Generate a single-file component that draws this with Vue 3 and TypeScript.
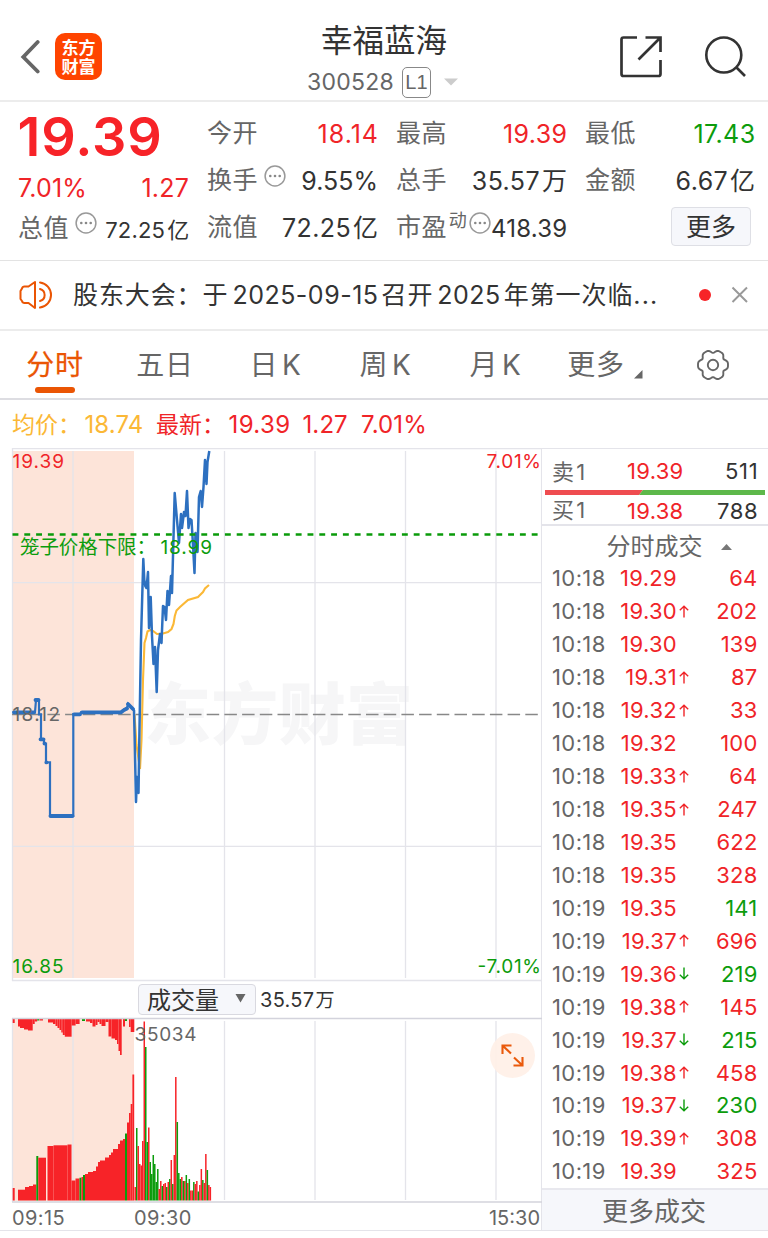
<script setup lang="ts">
interface Trade {
  time: string
  price: string
  dir: '' | 'up' | 'down'
  vol: string
  side: 'buy' | 'sell'
}
type Bar = [x: number, w: number, y: number, color: 'r' | 'g']

const parse = (row: string): Trade => {
  const [time, price, d, vol, s] = row.split(' ')
  return {
    time,
    price,
    dir: d === 'u' ? 'up' : d === 'd' ? 'down' : '',
    vol,
    side: s === 's' ? 'sell' : 'buy',
  }
}

const trades: Trade[] = [
  '10:18 19.29 - 64 b',
  '10:18 19.30 u 202 b',
  '10:18 19.30 - 139 b',
  '10:18 19.31 u 87 b',
  '10:18 19.32 u 33 b',
  '10:18 19.32 - 100 b',
  '10:18 19.33 u 64 b',
  '10:18 19.35 u 247 b',
  '10:18 19.35 - 622 b',
  '10:18 19.35 - 328 b',
  '10:19 19.35 - 141 s',
  '10:19 19.37 u 696 b',
  '10:19 19.36 d 219 s',
  '10:19 19.38 u 145 b',
  '10:19 19.37 d 215 s',
  '10:19 19.38 u 458 b',
  '10:19 19.37 d 230 s',
  '10:19 19.39 u 308 b',
  '10:19 19.39 - 325 b',
].map(parse)

const tabs = ['分时', '五日', '日 K', '周 K', '月 K']
const gridX = [73, 224.5, 315, 405.5, 496]

// Six-lobed gear outline, sampled every 5 degrees
const gear =
  'M' +
  Array.from({ length: 72 }, (_, i) => {
    const a = (i * Math.PI) / 36
    const r = 14 + 1.45 * Math.cos(6 * a) - 0.45 * Math.cos(12 * a)
    return `${(16 + r * Math.cos(a)).toFixed(2)} ${(16 + r * Math.sin(a)).toFixed(2)}`
  }).join('L') +
  'Z'

const prePrice =
  '12.5,712.3 35,712.3 36,700 39,700 39,714.3 41,714.3 41,739.3 44,739.3 44,743.5 46,743.5 46,762.3 50,762.3 50,816 73.3,816 73.3,714.3 80,714.3 81,712.3 121,712.3 124,709.5 127,708 128,703.7 131,707 134,710'
const price =
  '134,710 134.6,735 136,802 137,777 138.5,793 139.3,740 141,640 143.3,559 144.3,580 145.3,586 146.5,588 148,572 149,628 150.7,597 152,636 153.5,664 155,647 156.7,692 158,650 160,634 161.5,643 163,606 164.5,607 166,620 167.5,591 169,605 171,576 172,593 173.3,545 174.7,493 177,520 179,543 181,514 182,528 184,512 185.5,516 187,491 188.5,528 190,519 191.5,520 193,545 194.5,573 195.5,533 197.5,552 199,497 200.7,491 202,507 203.5,487 205,460 206.5,484 207.5,462 209.3,451'
const average =
  '134.5,714 136.5,745 140,769 141.5,740 143,680 144.5,643 146,638 147.5,631.5 150,630 153,631 157,634 163,633.5 168,632 171.5,629 173.5,624 174.8,616 176.5,610.5 180,607 188,600 198,597 199,596 203,592 205,588.5 209,585'

const hanging: Bar[] = [
  [12.7, 2, 1023, 'r'], [18, 2, 1026.5, 'r'], [20, 4, 1028, 'r'], [24, 4, 1029.5, 'r'], [28, 4.7, 1030.5, 'r'],
  [32.7, 2, 1024, 'r'], [34.7, 2.5, 1021.5, 'r'], [37.2, 2, 1020.5, 'g'], [39.5, 3.5, 1020.5, 'r'],
  [48, 5, 1022.5, 'r'], [53, 2.5, 1024, 'r'], [55.5, 2, 1026, 'r'], [57.5, 2, 1028, 'r'], [59.5, 1.8, 1030, 'r'],
  [61.3, 1.5, 1032.5, 'r'], [62.8, 2, 1035, 'r'], [64.8, 6.8, 1036.7, 'r'], [71.6, 4, 1025.5, 'r'], [75.6, 4, 1024, 'r'],
  [82, 3, 1021, 'g'], [86, 4, 1021.5, 'r'], [90, 2.5, 1023, 'r'], [92.5, 3, 1026.5, 'r'], [95.5, 2, 1025, 'r'],
  [97.5, 2, 1022, 'r'], [99.5, 2, 1024, 'r'], [101.5, 4, 1026, 'r'], [105.5, 3, 1022, 'r'], [108.5, 3, 1036.5, 'r'],
  [111.5, 3.5, 1038.5, 'r'], [115, 2, 1040, 'r'], [117, 1.5, 1044, 'r'], [118.5, 1.5, 1051, 'r'], [120, 1.7, 1055, 'r'],
  [123, 2, 1026.5, 'r'], [125, 2, 1021, 'g'], [129, 1.7, 1027, 'r'], [130.7, 3.6, 1032, 'r'],
]

const auction: Bar[] = [
  [12.7, 2, 1188, 'r'], [18, 7, 1189.7, 'r'], [25, 4, 1187, 'r'], [29, 4, 1186, 'r'], [33, 3.3, 1184.5, 'r'],
  [36.3, 2, 1156, 'g'], [38.3, 7.7, 1157.7, 'r'], [47.5, 6, 1146, 'r'], [53.5, 14, 1145.3, 'r'], [67.5, 4, 1144.5, 'r'],
  [71.5, 4, 1180.5, 'r'], [75.5, 4, 1178.5, 'r'], [79.5, 2, 1177.7, 'g'], [81.5, 1.5, 1177, 'r'], [83, 2, 1175, 'g'],
  [85, 3, 1174, 'r'], [88, 5, 1172, 'r'], [93, 3, 1171, 'r'], [96, 2, 1166.5, 'r'], [98, 2, 1162, 'r'],
  [100, 5, 1160.5, 'r'], [105, 4, 1157.5, 'r'], [109, 2, 1155, 'r'], [111, 2, 1152.5, 'r'], [113, 5, 1149, 'r'],
  [118, 2, 1144, 'r'], [120, 3, 1140.5, 'r'], [123, 2, 1139, 'r'], [125, 2, 1133.5, 'g'], [127, 2, 1122.5, 'r'],
  [129, 1.7, 1113, 'r'], [130.7, 1.7, 1104, 'r'], [132.4, 1.8, 1074.5, 'r'],
]

const sessionTops: string =
  'r1187 g1128 r1146 r1164 r1165.5 r1141 r1021.5 g1047 g1142 r1127.5 g1162 g1174 g1155 g1164 g1182 g1169 r1189 r1181 g1186 r1184 r1183 g1187 r1182 g1179 r1160 g1184 r1155 r1077 g1122 g1173 g1179 r1177 g1181 r1181 g1175 r1183 g1179 r1190.5 r1190.5 g1182 r1184 r1181 g1191.5 r1185 r1169 g1180 r1183 r1154 g1170 r1185 r1187'
const session: Bar[] = sessionTops
  .split(' ')
  .map((s, i): Bar => [134.5 + i * 1.502, 1.5, Number(s.slice(1)), s[0] as 'r' | 'g'])

const fill = (c: 'r' | 'g') => (c === 'r' ? '#f72328' : '#0c9c0c')
</script>

<template>
  <div class="page">
    <header class="top">
      <div class="top-left">
        <svg class="back" width="20" height="36" viewBox="0 0 20 36">
          <path d="M17.700 3 3.300 18 17.700 32.500" fill="none" stroke="#666" stroke-width="3.800" stroke-linecap="round" stroke-linejoin="miter" />
        </svg>
        <div class="logo"><span>东方财富</span></div>
      </div>
      <div class="top-mid">
        <h1>幸福蓝海</h1>
        <div class="code">
          <span class="num">300528</span><span class="level">L1</span>
          <svg width="14" height="8" viewBox="0 0 14 8"><path d="M0 .5h14L7 7.5z" fill="#ccc" /></svg>
        </div>
      </div>
      <div class="top-right">
        <svg width="44" height="44" viewBox="0 0 44 44" fill="none" stroke="#333" stroke-width="2.700" stroke-linejoin="round">
          <path d="M18 2.500H4.500Q2.500 2.500 2.500 4.500V39Q2.500 41 4.500 41H39.500Q41.500 41 41.500 39V25" />
          <path d="M26.500 2.500H41.500V17M41 3 19.500 24.500" stroke-linejoin="miter" />
        </svg>
        <svg width="44" height="44" viewBox="0 0 44 44" fill="none" stroke="#333" stroke-width="2.600">
          <circle cx="19.800" cy="20" r="17.500" />
          <path d="M32 32 41 41" />
        </svg>
      </div>
    </header>

    <section class="stats">
      <div class="col first">
        <div class="big">19.39</div>
        <div class="cell second red"><span>7.01%</span><span>1.27</span></div>
        <div class="cell small">
          <span class="lab">总值</span>
          <svg class="dots" width="22" height="22" viewBox="0 0 22 22"><circle cx="11" cy="11" r="9.900" fill="none" stroke="#999" stroke-width="1.500" /><g fill="#888"><circle cx="6.300" cy="11" r="1.300" /><circle cx="11" cy="11" r="1.300" /><circle cx="15.700" cy="11" r="1.300" /></g></svg>
          <span class="val">72.25<i>亿</i></span>
        </div>
      </div>
      <div class="col">
        <div class="cell"><span class="lab">今开</span><span class="val red wide">18.14</span></div>
        <div class="cell">
          <span class="lab">换手</span>
          <svg class="dots" width="22" height="22" viewBox="0 0 22 22"><circle cx="11" cy="11" r="9.900" fill="none" stroke="#999" stroke-width="1.500" /><g fill="#888"><circle cx="6.300" cy="11" r="1.300" /><circle cx="11" cy="11" r="1.300" /><circle cx="15.700" cy="11" r="1.300" /></g></svg>
          <span class="val tight">9.55%</span>
        </div>
        <div class="cell"><span class="lab">流值</span><span class="val">72.25<i>亿</i></span></div>
      </div>
      <div class="col">
        <div class="cell"><span class="lab">最高</span><span class="val red">19.39</span></div>
        <div class="cell"><span class="lab">总手</span><span class="val">35.57<i>万</i></span></div>
        <div class="cell pe">
          <span class="lab">市盈</span><span class="sup">动</span>
          <svg class="dots" width="22" height="22" viewBox="0 0 22 22"><circle cx="11" cy="11" r="9.900" fill="none" stroke="#999" stroke-width="1.500" /><g fill="#888"><circle cx="6.300" cy="11" r="1.300" /><circle cx="11" cy="11" r="1.300" /><circle cx="15.700" cy="11" r="1.300" /></g></svg>
          <span class="val">418.39</span>
        </div>
      </div>
      <div class="col last">
        <div class="cell"><span class="lab">最低</span><span class="val green">17.43</span></div>
        <div class="cell"><span class="lab">金额</span><span class="val">6.67<i>亿</i></span></div>
        <div class="cell end"><button class="more" type="button">更多</button></div>
      </div>
    </section>

    <section class="notice">
      <svg width="36" height="30" viewBox="0 0 36 30" fill="none" stroke="#ea5504" stroke-width="2" stroke-linejoin="round" stroke-linecap="round">
        <path d="M16 2 9.500 6.500H5.500Q3.500 6.500 3 8.500L1.500 11V19L3 21Q3.500 23 5.500 23H9.500L16 28Z" />
        <path d="M21 2.500A12.600 12.600 0 0 1 21 27.500M21 9A6.200 6.200 0 0 1 21 21" />
      </svg>
      <p>股东大会：于<b>2025-09-15</b>召开<b>2025</b>年第一次临<b class="ell">...</b></p>
      <span class="reddot"></span>
      <svg class="close" width="18" height="18" viewBox="0 0 18 18"><path d="M1.500 1.500 16 16M16 1.500 1.500 16" stroke="#999" stroke-width="2" /></svg>
    </section>

    <nav class="tabs">
      <div v-for="(t, i) in tabs" :key="t" class="tab" :class="{ active: i === 0, k: i > 1 }">{{ t }}</div>
      <div class="tab">更多<svg class="corner" width="9" height="9" viewBox="0 0 9 9"><path d="M8.500 0V8.500H0z" fill="#666" /></svg></div>
      <div class="gear">
        <svg width="32" height="32" viewBox="0 0 32 32" fill="none" stroke="#666" stroke-width="1.900" stroke-linejoin="round">
          <path :d="gear" />
          <circle cx="16" cy="16" r="5.200" />
        </svg>
      </div>
    </nav>

    <div class="legend">
      <span class="avg l1">均价：</span><span class="avg v1">18.74</span>
      <span class="red l2">最新：</span><span class="red v2">19.39</span><span class="red v3">1.27</span><span class="red v4">7.01%</span>
    </div>

    <main class="body">
      <div class="charts">
        <svg class="price-chart" width="542" height="534" viewBox="0 448 542 534">
          <rect x="12.500" y="451" width="121.500" height="527" fill="#fde4d9" />
          <text class="mark" x="144" y="739" textLength="269">东方财富</text>
          <g stroke="#e4e4ea" stroke-width="1.300" fill="none">
            <path v-for="x in gridX" :key="x" :d="`M${x} 451V978`" />
            <path d="M12.500 448V981M12 448.600H542M12 980.500H542M12 582.600H541M12 846.300H541M541.600 448V982" />
          </g>
          <path d="M12 714.500H541" stroke="#888" stroke-width="1.300" stroke-dasharray="12.500 5.200" />
          <polyline :points="average" fill="none" stroke="#fbb836" stroke-width="2.100" />
          <polyline :points="prePrice" fill="none" stroke="#2d70c0" stroke-width="2.200" />
          <g stroke="#2d70c0" stroke-width="3.800" stroke-linecap="round" fill="none">
            <path d="M14 712.300H34M35.500 700H38.500M40.500 739.300H43.500M50.500 816H72.500M74 714.300H80M82 712.300H121L124 710L127 708.500M128 704L133 709" />
            <path d="M46.400 762.300v.1M44.500 743.500v.1" />
          </g>
          <polyline :points="price" fill="none" stroke="#2d70c0" stroke-width="2.500" stroke-linejoin="round" />
          <path d="M12.500 534.500H541" stroke="#0a9b0a" stroke-width="2.600" stroke-dasharray="5.900 5.900" />
          <g class="ct">
            <text x="12.500" y="468" textLength="51.500" fill="#f02428">19.39</text>
            <text x="486.500" y="468" textLength="54.500" fill="#f02428">7.01%</text>
            <text x="12.500" y="973" textLength="51" fill="#0c9c0c">16.85</text>
            <text x="477.500" y="973" textLength="63.500" fill="#0c9c0c">-7.01%</text>
            <text x="12.500" y="720.500" textLength="47.500" fill="#666">18.12</text>
            <text x="20" y="554" textLength="136" fill="#0c9c0c" class="cage">笼子价格下限：</text>
            <text x="160.500" y="553.500" textLength="51.500" fill="#0c9c0c">18.99</text>
          </g>
        </svg>

        <div class="indicator">
          <button class="select" type="button">成交量<svg width="11" height="9" viewBox="0 0 11 9"><path d="M.5 0h10L5.500 8.500z" fill="#666" /></svg></button>
          <span class="total">35.57<i>万</i></span>
        </div>

        <svg class="vol-chart" width="542" height="186" viewBox="0 1017 542 186">
          <rect x="12.500" y="1019" width="121.500" height="182" fill="#fde4d9" />
          <g stroke="#e4e4ea" stroke-width="1.300"><path v-for="x in gridX" :key="x" :d="`M${x} 1021V1200`" /><path d="M12.500 1018V1202M541.600 1017V1203" /></g>
          <rect v-for="(b, i) in hanging" :key="'h' + i" :x="b[0]" y="1019" :width="b[1]" :height="b[2] - 1019" :fill="fill(b[3])" />
          <rect v-for="(b, i) in auction" :key="'a' + i" :x="b[0]" :y="b[2]" :width="b[1]" :height="1200.5 - b[2]" :fill="fill(b[3])" />
          <rect v-for="(b, i) in session" :key="'s' + i" :x="b[0]" :y="b[2]" :width="b[1]" :height="1200.5 - b[2]" :fill="fill(b[3])" />
          <path d="M12 1018.500H542M12 1202H542" stroke="#d3d3dc" stroke-width="1.600" />
          <text class="ct" x="134.500" y="1040.500" textLength="62" fill="#666">35034</text>
          <circle cx="512.500" cy="1055.500" r="22.500" fill="#fff0e7" fill-opacity=".9" />
          <path d="M502.500 1054V1045.500H511.500M503 1046 511 1053.500M513.500 1065.500H522.500V1057M514 1057.500 522 1065" fill="none" stroke="#ea5a0c" stroke-width="2.100" />
        </svg>

        <div class="axis"><span>09:15</span><span>09:30</span><span class="endt">15:30</span></div>
      </div>

      <aside class="side">
        <div class="quote ask"><span class="q-l">卖<b>1</b></span><span class="q-p">19.39</span><span class="q-v">511</span></div>
        <svg class="ratio" width="220" height="5" viewBox="0 0 220 5"><path d="M0 0H98L94 5H0z" fill="#ef4c50" /><path d="M98 0H220V5H94z" fill="#5db84a" /></svg>
        <div class="quote bid"><span class="q-l">买<b>1</b></span><span class="q-p">19.38</span><span class="q-v">788</span></div>
        <div class="t-head">分时成交<svg width="11" height="6" viewBox="0 0 11 6"><path d="M0 6 5.500 0 11 6z" fill="#777" /></svg></div>
        <ul class="trades">
          <li v-for="(t, i) in trades" :key="i">
            <span class="t-t">{{ t.time }}</span>
            <span class="t-p">{{ t.price }}</span>
            <span class="t-a">
              <svg v-if="t.dir" :class="t.dir" width="10" height="13" viewBox="0 0 10 13"><path :d="t.dir === 'up' ? 'M5 12.500V1.500M.8 5.200 5 1.200 9.200 5.200' : 'M5 .5V11.500M.8 7.800 5 11.800 9.200 7.800'" fill="none" stroke="currentColor" stroke-width="1.400" /></svg>
            </span>
            <span class="t-v" :class="t.side">{{ t.vol }}</span>
          </li>
        </ul>
        <div class="t-more">更多成交</div>
      </aside>
    </main>
  </div>
</template>

<style>
html, body { margin: 0; background: #fff; }
</style>

<style scoped>
.page { width: 768px; height: 1238px; overflow: hidden; background: #fff; color: #333; font-family: Inter, "Noto Sans CJK SC", sans-serif; font-weight: 400; }
.page * { box-sizing: border-box; }
.page svg { display: block; flex: none; }
b, i { font-weight: 400; font-style: normal; }
.red { color: #f02428; }
.green { color: #0c9c0c; }

.top { display: grid; grid-template-columns: 1fr auto 1fr; height: 102px; border-bottom: 2px solid #ececec; }
.top-left { display: flex; align-items: center; padding: 13px 0 0 20px; }
.logo { display: flex; align-items: center; justify-content: center; width: 47px; height: 47px; margin-left: 15px; border-radius: 10px; background: #ff4400; color: #fff; font: 700 17px/19px "Noto Sans CJK SC", sans-serif; }
.logo span { width: 34px; margin-bottom: 2px; word-break: break-all; }
.top-mid { display: flex; flex-direction: column; align-items: center; }
h1 { margin: 22px 0 0; font-size: 31.500px; line-height: 38px; font-weight: 400; color: #333; }
.code { display: flex; align-items: center; height: 32px; margin: 6px 0 0 -3px; color: #666; font-size: 23px; }
.num { letter-spacing: .25px; }
.level { width: 29px; height: 31px; margin: 0 13px 0 8px; border: 1.500px solid #888; border-radius: 5px; font: 20px/29px "Liberation Sans", sans-serif; text-align: center; }
.top-right { display: flex; justify-content: flex-end; gap: 41px; padding: 35px 20px 0 0; }

.stats { display: grid; grid-template-columns: repeat(4, 171px); gap: 18px; height: 159px; padding: 8px 12px 0 18px; border-bottom: 1px solid #e3e3e3; }
.col { display: flex; flex-direction: column; }
.cell { display: flex; align-items: center; height: 47px; font-size: 25px; line-height: 36px; white-space: nowrap; }
.lab { color: #666; letter-spacing: .4px; margin-top: -2px; }
.val { margin: 0 -.4px 0 auto; letter-spacing: .4px; }
.val i { margin-left: 2px; }
.wide { letter-spacing: 1px; margin-right: -1px; }
.tight { letter-spacing: 0; margin-right: 0; }
.last .val { margin-right: .5px; }
.dots { margin: -10px 0 0 6px; }
.big { height: 54px; margin-left: -.5px; font-size: 54px; line-height: 54px; font-weight: 600; letter-spacing: .9px; color: #f72328; }
.second { height: 47px; justify-content: space-between; font-size: 25px; letter-spacing: .2px; }
.first .small { height: 34px; }
.small .lab { margin-top: -1px; }
.small .dots { margin-top: -11px; }
.small .val { font-size: 22px; margin-top: 3px; letter-spacing: .2px; }
.pe .sup { align-self: flex-start; margin-left: 2px; font-size: 18px; line-height: 33px; color: #666; }
.pe .dots { margin: -10px 0 0 2px; }
.pe .val { font-size: 24px; letter-spacing: .2px; margin-top: 3px; }
.end { justify-content: flex-end; }
.more { width: 80px; height: 39px; margin: -3px 5px 0 0; padding: 0 0 2px; border: 1.500px solid #dedfe5; border-radius: 4px; background: #f6f7fb; color: #333; font: 25px/34px "Noto Sans CJK SC", sans-serif; }

.notice { display: flex; align-items: center; height: 70px; padding: 0 19px; border-bottom: 2px solid #ececec; }
.notice p { margin: -1px 0 0 18px; width: 612px; font-size: 25px; line-height: 36px; white-space: nowrap; letter-spacing: .9px; }
.notice b { margin: 0 3px 0 4px; letter-spacing: .5px; }
.notice .ell { margin: 0; letter-spacing: 1.200px; }
.reddot { width: 12px; height: 12px; margin-left: 14px; border-radius: 50%; background: #f72328; }
.close { margin-left: 20px; }

.tabs { display: grid; grid-template-columns: repeat(6, 110px) 1fr; height: 69px; border-bottom: 2px solid #dddde2; }
.tab { display: flex; align-items: center; justify-content: center; position: relative; padding: 0 0 3px; font-size: 28px; letter-spacing: .8px; color: #666; white-space: pre; }
.k { padding-left: 1px; word-spacing: -5px; }
.active { color: #ea5504; -webkit-text-stroke: .25px #ea5504; }
.active::after { content: ""; position: absolute; left: 35px; bottom: 5px; width: 40px; height: 6px; border-radius: 3px; background: #ea5504; }
.corner { margin: 23px 0 0 9px; }
.gear { display: flex; align-items: center; justify-content: center; padding: 0 2px 0 0; }

.legend { display: flex; align-items: center; height: 48px; padding-left: 12px; font-size: 24px; letter-spacing: .1px; white-space: nowrap; }
.avg { color: #fbb836; }
.l1, .l2 { width: 72.500px; margin-top: -2px; font-size: 23px; letter-spacing: 0; }
.v1 { width: 71.500px; }
.v2 { width: 74px; letter-spacing: .4px; }
.v3 { width: 58.500px; }

.body { display: flex; }
.charts { width: 542px; }
.ct { font-size: 19px; }
.cage { font-size: 19.500px; }
.mark { font: 900 67px "Noto Sans CJK SC", sans-serif; fill: #f6f6f7; }
.indicator { display: flex; align-items: center; height: 35px; padding-left: 138px; border-right: 1px solid #e4e4ea; }
.select { display: flex; align-items: center; justify-content: space-between; width: 118px; height: 31px; padding: 0 9px 2px 8px; border: 1px solid #d9d9e0; border-radius: 4px; background: #f6f7fb; color: #333; font: 24px/26px "Noto Sans CJK SC", sans-serif; }
.total { margin: -2px 0 0 4px; font-size: 20px; letter-spacing: .3px; }
.total i { margin-left: 1px; font-size: 19px; }
.axis { display: flex; align-items: center; height: 28px; padding: 2px 1px 0 12px; border-right: 1px solid #e4e4ea; border-bottom: 1px solid #e4e4ea; font-size: 20px; letter-spacing: .4px; color: #666; }
.axis span:first-child { width: 122px; }
.endt { margin-left: auto; letter-spacing: 0; }

.side { width: 226px; font-size: 22px; letter-spacing: .3px; }
.quote { display: grid; grid-template-columns: 75px 1fr auto; align-items: center; padding: 0 10px; }
.quote b { margin-left: 2px; }
.ask { height: 42px; border-top: 1px solid #e4e4ea; padding-top: 2px; }
.bid { height: 31px; border-bottom: 2px solid #e4e4ea; padding-top: 4px; line-height: 25px; }
.ratio { margin-left: 3px; }
.q-l { color: #666; margin-top: -2px; }
.q-p { color: #f02428; }
.q-v { letter-spacing: .7px; margin-right: -.4px; }
.t-head { display: flex; align-items: center; justify-content: center; gap: 18px; height: 36px; padding: 5px 0 0 28px; font-size: 24px; line-height: 30px; letter-spacing: 0; color: #666; }
.trades { margin: 0; padding: 0; list-style: none; }
.trades li { display: grid; grid-template-columns: 60px 65px 14px 1fr; align-items: center; height: 32.950px; padding: 0 10.500px 0 10px; }
.t-t { color: #666; letter-spacing: .4px; }
.t-p { color: #f02428; text-align: right; }
.t-a { padding-left: 2px; }
.t-v { text-align: right; letter-spacing: .2px; }
.up, .buy { color: #f02428; }
.down, .sell { color: #0c9c0c; }
.t-more { display: flex; align-items: center; justify-content: center; height: 43px; padding-right: 2px; border-top: 2px solid #e8e8ee; border-bottom: 1px solid #e4e4ea; background: #f6f7fb; color: #666; font-size: 26px; letter-spacing: 0; }
</style>
